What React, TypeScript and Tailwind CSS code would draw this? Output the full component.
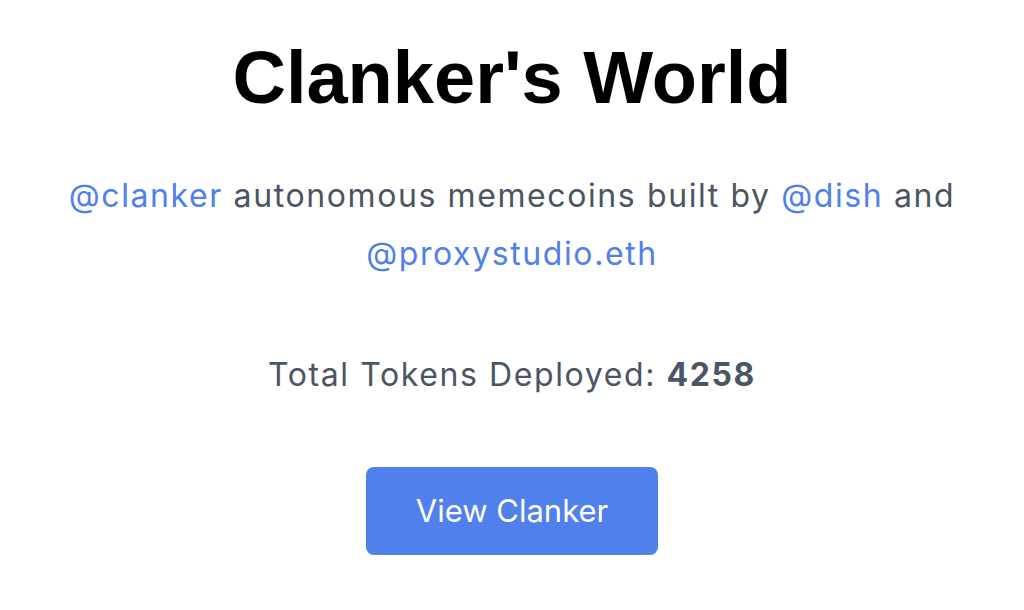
export default function App() {
  return (
    <main className="flex min-h-[610px] flex-col items-center bg-white px-8 pt-[41px] text-center font-['Inter',sans-serif]">
      <h1 className="font-['Liberation_Sans',Arial,sans-serif] text-[74px] font-bold leading-none text-black">
        Clanker's World
      </h1>
      <p className="mt-[52px] max-w-[920px] text-[32px] leading-[58px] tracking-[1.6px] text-[#4b5563]">
        <a href="#" className="text-[#4f80ec]">@clanker</a> autonomous memecoins built by{' '}
        <a href="#" className="text-[#4f80ec]">@dish</a> and{' '}
        <a href="#" className="text-[#4f80ec]">@proxystudio.eth</a>
      </p>
      <p className="mt-[74px] text-[32px] leading-[36px] tracking-[1.6px] text-[#4b5563]">
        Total Tokens Deployed: <span className="font-bold">4258</span>
      </p>
      <button className="mt-[74px] h-[88px] w-[292px] rounded-lg bg-[#4f80ec] text-[31px] text-white">
        View Clanker
      </button>
    </main>
  )
}
